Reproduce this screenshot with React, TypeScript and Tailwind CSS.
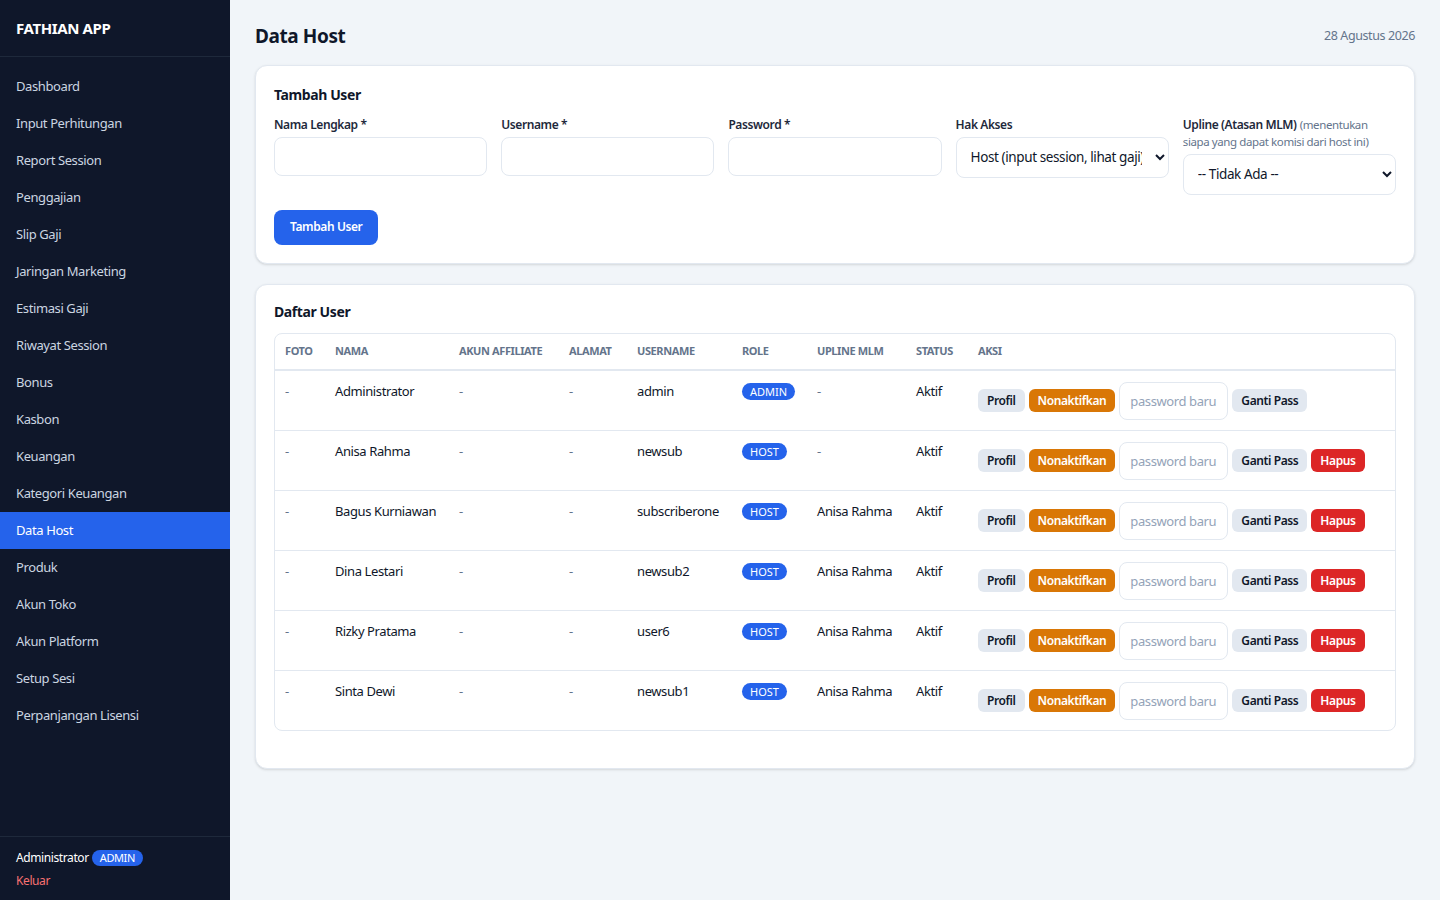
import React from "react";

const nav = [
  "Dashboard",
  "Input Perhitungan",
  "Report Session",
  "Penggajian",
  "Slip Gaji",
  "Jaringan Marketing",
  "Estimasi Gaji",
  "Riwayat Session",
  "Bonus",
  "Kasbon",
  "Keuangan",
  "Kategori Keuangan",
  "Data Host",
  "Produk",
  "Akun Toko",
  "Akun Platform",
  "Setup Sesi",
  "Perpanjangan Lisensi",
];

const users = [
  { nama: "Administrator", username: "admin", role: "ADMIN", upline: "-", hapus: false },
  { nama: "Anisa Rahma", username: "newsub", role: "HOST", upline: "-", hapus: true },
  { nama: "Bagus Kurniawan", username: "subscriberone", role: "HOST", upline: "Anisa Rahma", hapus: true },
  { nama: "Dina Lestari", username: "newsub2", role: "HOST", upline: "Anisa Rahma", hapus: true },
  { nama: "Rizky Pratama", username: "user6", role: "HOST", upline: "Anisa Rahma", hapus: true },
  { nama: "Sinta Dewi", username: "newsub1", role: "HOST", upline: "Anisa Rahma", hapus: true },
];

const font = { fontFamily: "'Noto Sans', 'Open Sans', sans-serif" };

function Field({ label, children }: { label: React.ReactNode; children: React.ReactNode }) {
  return (
    <div className="flex flex-col gap-[4px]">
      <label className="text-[12px] font-semibold leading-[17px] text-[#1e293b]">{label}</label>
      {children}
    </div>
  );
}

export default function App() {
  return (
    <div className="flex min-h-[900px] w-full bg-[#f1f5f9] tracking-[-0.025em]" style={font}>
      <aside className="flex w-[230px] shrink-0 flex-col bg-[#0f172a]">
        <div className="flex h-[57px] items-center border-b border-[#1e293b] px-4">
          <span className="text-[15px] font-bold text-white">FATHIAN APP</span>
        </div>
        <nav className="flex flex-col pt-[11px]">
          {nav.map((n) => (
            <div
              key={n}
              className={`flex h-[37px] items-center px-4 text-[13px] ${
                n === "Data Host" ? "bg-[#2563eb] text-white" : "text-[#cbd5e1]"
              }`}
            >
              {n}
            </div>
          ))}
        </nav>
        <div className="mt-auto border-t border-[#1e293b] px-4 pb-[10px] pt-[12px]">
          <div className="flex items-center gap-[3px] text-[12px] text-white">
            <span>Administrator</span>
            <span className="rounded-full bg-[#2563eb] px-[8px] py-[1px] text-[11px] leading-[14px]">ADMIN</span>
          </div>
          <div className="mt-[5px] text-[12px] text-[#f87171]">Keluar</div>
        </div>
      </aside>

      <main className="flex-1 px-[25px] pt-[22px]">
        <div className="flex items-center justify-between">
          <h1 className="text-[19px] font-bold text-[#0f172a]">Data Host</h1>
          <span className="text-[12.5px] text-[#64748b]">28 Agustus 2026</span>
        </div>

        <section className="mt-[14px] rounded-xl border border-[#e2e8f0] bg-white px-[18px] pb-[18px] pt-[18px] shadow-sm">
          <h2 className="text-[14px] font-bold text-[#0f172a]">Tambah User</h2>
          <div className="mt-[11px] grid grid-cols-5 items-start gap-[14px]">
            <Field label="Nama Lengkap *">
              <input className="h-[39px] w-full rounded-lg border border-[#e2e8f0] px-3 text-[13px] outline-none" />
            </Field>
            <Field label="Username *">
              <input className="h-[39px] w-full rounded-lg border border-[#e2e8f0] px-3 text-[13px] outline-none" />
            </Field>
            <Field label="Password *">
              <input type="password" className="h-[39px] w-full rounded-lg border border-[#e2e8f0] px-3 text-[13px] outline-none" />
            </Field>
            <Field label="Hak Akses">
              <select className="h-[41px] w-full rounded-lg border border-[#e2e8f0] bg-white px-[10px] text-[13.5px] text-[#0f172a] outline-none">
                <option>Host (input session, lihat gaji)</option>
              </select>
            </Field>
            <Field
              label={
                <span className="block">
                  Upline (Atasan MLM)
                  <span className="font-normal tracking-normal text-[#64748b]"> </span>
                  <span className="text-[11.5px] font-normal text-[#64748b]">(menentukan siapa yang dapat komisi dari host ini)</span>
                </span>
              }
            >
              <select className="h-[41px] w-full rounded-lg border border-[#e2e8f0] bg-white px-[10px] text-[13.5px] text-[#0f172a] outline-none">
                <option>-- Tidak Ada --</option>
              </select>
            </Field>
          </div>
          <button className="mt-[15px] h-[35px] rounded-lg bg-[#2563eb] px-[16px] text-[12px] font-semibold text-white">
            Tambah User
          </button>
        </section>

        <section className="mt-[20px] rounded-xl border border-[#e2e8f0] bg-white px-[18px] pb-[37px] pt-[16px] shadow-sm">
          <h2 className="text-[14px] font-bold text-[#0f172a]">Daftar User</h2>
          <div className="mt-[11px] overflow-hidden rounded-lg border border-[#e2e8f0]">
            <table className="w-full table-fixed border-collapse text-left">
              <colgroup>
                <col className="w-[50px]" />
                <col className="w-[124px]" />
                <col className="w-[110px]" />
                <col className="w-[68px]" />
                <col className="w-[105px]" />
                <col className="w-[75px]" />
                <col className="w-[99px]" />
                <col className="w-[62px]" />
                <col />
              </colgroup>
              <thead>
                <tr className="border-b-2 border-[#e2e8f0]">
                  {["FOTO", "NAMA", "AKUN AFFILIATE", "ALAMAT", "USERNAME", "ROLE", "UPLINE MLM", "STATUS", "AKSI"].map((h) => (
                    <th key={h} className="h-[36px] whitespace-nowrap px-[10px] text-[11px] font-bold text-[#64748b]">
                      {h}
                    </th>
                  ))}
                </tr>
              </thead>
              <tbody>
                {users.map((u, i) => (
                  <tr key={u.username} className={i < users.length - 1 ? "border-b border-[#e2e8f0]" : ""}>
                    <td className="px-[10px] pt-[10px] align-top text-[13px] leading-[20px] text-[#64748b]">-</td>
                    <td className="whitespace-nowrap px-[10px] pt-[10px] align-top text-[13px] leading-[20px] text-[#0f172a]">{u.nama}</td>
                    <td className="px-[10px] pt-[10px] align-top text-[13px] leading-[20px] text-[#64748b]">-</td>
                    <td className="px-[10px] pt-[10px] align-top text-[13px] leading-[20px] text-[#64748b]">-</td>
                    <td className="whitespace-nowrap px-[10px] pt-[10px] align-top text-[13px] leading-[20px] text-[#0f172a]">{u.username}</td>
                    <td className="px-[10px] pt-[12px] align-top leading-none">
                      <span className="block w-fit rounded-full bg-[#2563eb] px-[8px] text-[11px] leading-[17px] tracking-normal text-white">
                        {u.role}
                      </span>
                    </td>
                    <td className={`whitespace-nowrap px-[10px] pt-[10px] align-top text-[13px] leading-[20px] ${u.upline === "-" ? "text-[#64748b]" : "text-[#0f172a]"}`}>
                      {u.upline}
                    </td>
                    <td className="px-[10px] pt-[10px] align-top text-[13px] leading-[20px] text-[#0f172a]">Aktif</td>
                    <td className="px-[10px] pb-[10px] pt-[11px] align-top">
                      <div className="flex items-center gap-[4px] whitespace-nowrap">
                        <button className="h-[23px] rounded-md bg-[#e2e8f0] px-[9px] text-[12px] font-semibold text-[#0f172a]">
                          Profil
                        </button>
                        <button className="h-[23px] rounded-md bg-[#d97706] px-[9px] text-[12px] font-semibold text-white">
                          Nonaktifkan
                        </button>
                        <input
                          placeholder="password baru"
                          className="h-[38px] w-[109px] rounded-lg border border-[#e2e8f0] px-[10px] text-[13px] text-[#0f172a] outline-none placeholder:text-[#94a3b8]"
                        />
                        <button className="h-[23px] rounded-md bg-[#e2e8f0] px-[9px] text-[12px] font-semibold text-[#0f172a]">
                          Ganti Pass
                        </button>
                        {u.hapus && (
                          <button className="h-[23px] rounded-md bg-[#dc2626] px-[9px] text-[12px] font-semibold text-white">
                            Hapus
                          </button>
                        )}
                      </div>
                    </td>
                  </tr>
                ))}
              </tbody>
            </table>
          </div>
        </section>
      </main>
    </div>
  );
}
